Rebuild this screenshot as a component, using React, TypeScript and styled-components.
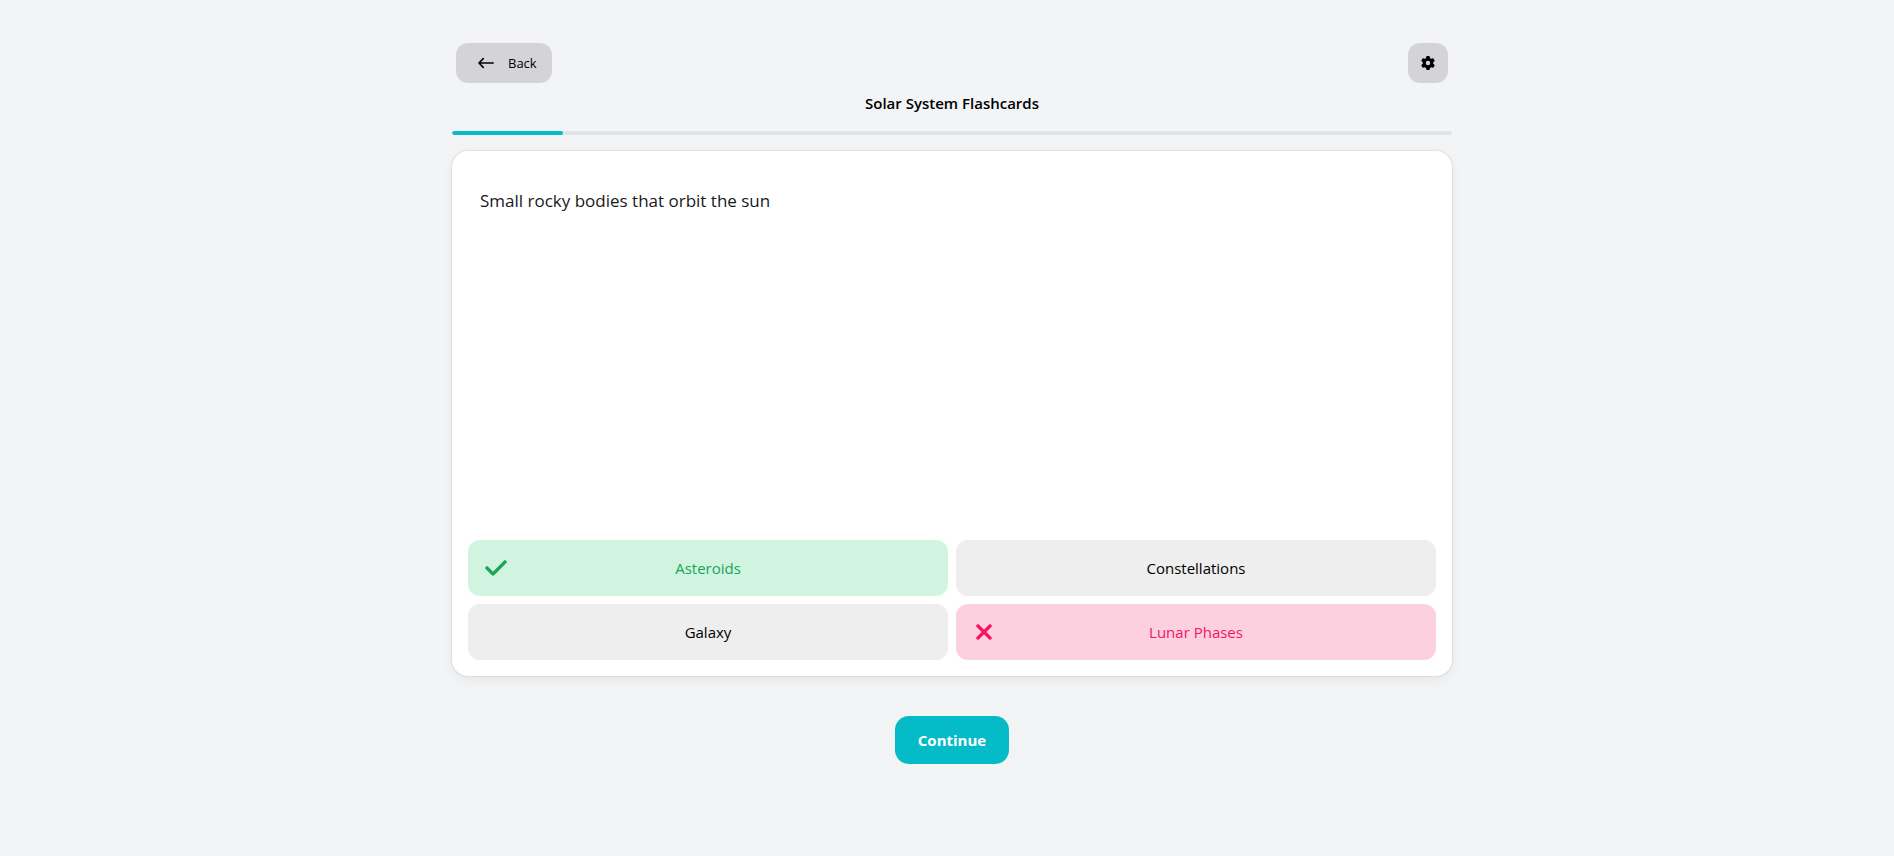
import React from "react";
import styled, { createGlobalStyle } from "styled-components";
import { FaCheck, FaGear, FaXmark } from "react-icons/fa6";

type AnswerState = "idle" | "correct" | "wrong";

const answerColors: Record<AnswerState, { background: string; color: string }> = {
  idle: { background: "#eeeeee", color: "#000000" },
  correct: { background: "#d0f4e0", color: "#16a55a" },
  wrong: { background: "#fcd0df", color: "#f5145f" },
};

const GlobalStyle = createGlobalStyle`
  *, *::before, *::after { box-sizing: border-box; }
  body {
    margin: 0;
    background: #f2f4f6;
    color: #000000;
    font-family: "Segoe UI", "Open Sans", "Noto Sans", sans-serif;
  }
  button { font-family: inherit; cursor: pointer; }
`;

const Page = styled.main`
  width: 100%;
  padding: 43px 0 40px 10px;
`;

const Content = styled.div`
  display: flex;
  flex-direction: column;
  width: 100%;
  max-width: 1000px;
  margin: 0 auto;
`;

const Toolbar = styled.header`
  display: flex;
  justify-content: space-between;
  padding: 0 4px;
`;

const ToolButton = styled.button`
  display: flex;
  align-items: center;
  justify-content: center;
  gap: 14px;
  height: 40px;
  min-width: 40px;
  padding: 0;
  border: 0;
  border-radius: 12px;
  background: #d4d4d8;
  color: #000000;
  font-size: 13px;
  line-height: 20px;
`;

const BackButton = styled(ToolButton)`
  padding: 0 15px 0 22px;
`;

const Title = styled.h1`
  margin: 8px 0 16px;
  font-size: 15px;
  font-weight: 600;
  line-height: 24px;
  text-align: center;
`;

const Progress = styled.div`
  height: 4px;
  overflow: hidden;
  border-radius: 2px;
  background: #e2e3e6;
`;

const ProgressFill = styled.div`
  height: 100%;
  border-radius: 2px;
  background: #06bbc8;
`;

const Card = styled.section`
  display: flex;
  flex-direction: column;
  margin-top: 16px;
  padding: 16px;
  border-radius: 16px;
  background: #ffffff;
  box-shadow: 0 0 2px rgba(0, 0, 0, 0.2), 0 4px 12px rgba(0, 0, 0, 0.06);
`;

const Question = styled.p`
  min-height: 373px;
  margin: 0;
  padding: 20px 12px;
  color: #18181b;
  font-size: 17px;
  line-height: 28px;
`;

const Answers = styled.div`
  display: grid;
  grid-template-columns: 1fr 1fr;
  gap: 8px;
`;

const Answer = styled.button<{ $state: AnswerState }>`
  display: grid;
  grid-template-columns: 24px 1fr 24px;
  align-items: center;
  height: 56px;
  padding: 0 16px;
  border: 0;
  border-radius: 12px;
  background: ${({ $state }) => answerColors[$state].background};
  color: ${({ $state }) => answerColors[$state].color};
  font-size: 15px;
  line-height: 24px;

  svg {
    stroke: currentColor;
    stroke-width: 12px;
  }
`;

const AnswerLabel = styled.span`
  grid-column: 2;
`;

const ContinueButton = styled.button`
  align-self: center;
  height: 48px;
  margin-top: 40px;
  padding: 0 23px;
  border: 0;
  border-radius: 14px;
  background: #06bbc8;
  color: #ffffff;
  font-size: 15px;
  font-weight: 700;
  line-height: 24px;
`;

const answers: { label: string; state: AnswerState }[] = [
  { label: "Asteroids", state: "correct" },
  { label: "Constellations", state: "idle" },
  { label: "Galaxy", state: "idle" },
  { label: "Lunar Phases", state: "wrong" },
];

const ArrowLeft = () => (
  <svg width="16" height="12" viewBox="0 0 16 12" fill="none" stroke="currentColor" strokeWidth="1.6" strokeLinecap="round" strokeLinejoin="round" aria-hidden="true">
    <path d="M15.2 6H1M5.2 1.6L1 6l4.2 4.4" />
  </svg>
);

export default function App() {
  return (
    <>
      <GlobalStyle />
      <Page>
        <Content>
          <Toolbar>
            <BackButton type="button">
              <ArrowLeft />
              Back
            </BackButton>
            <ToolButton type="button" aria-label="Settings">
              <FaGear size={14} />
            </ToolButton>
          </Toolbar>
          <Title>Solar System Flashcards</Title>
          <Progress role="progressbar" aria-label="Progress" aria-valuemin={0} aria-valuemax={9} aria-valuenow={1}>
            <ProgressFill style={{ width: `${(1 / 9) * 100}%` }} />
          </Progress>
          <Card>
            <Question>Small rocky bodies that orbit the sun</Question>
            <Answers>
              {answers.map(({ label, state }) => (
                <Answer key={label} type="button" $state={state}>
                  {state === "correct" && <FaCheck size={24} />}
                  {state === "wrong" && <FaXmark size={24} />}
                  <AnswerLabel>{label}</AnswerLabel>
                </Answer>
              ))}
            </Answers>
          </Card>
          <ContinueButton type="button">Continue</ContinueButton>
        </Content>
      </Page>
    </>
  );
}
